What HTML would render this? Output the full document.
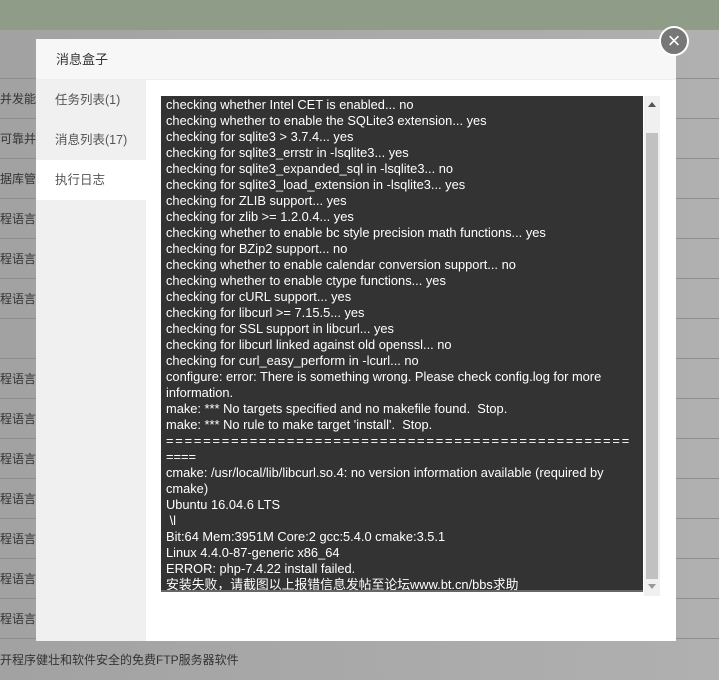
<!DOCTYPE html>
<html><head><meta charset="utf-8"><style>
*{margin:0;padding:0;box-sizing:border-box}
body{width:719px;height:673px;overflow:hidden;position:relative;background:linear-gradient(90deg,#a2a2a2,#b0b0b0);font-family:"Liberation Sans","Noto Sans CJK SC",sans-serif}
.top{position:absolute;left:0;top:0;width:719px;height:30px;background:#8f9c87}
.row{position:absolute;left:0;width:719px;height:40px;border-bottom:1px solid #8e8e8e;font-size:12px;color:#333;line-height:40px;white-space:nowrap}
.dlg{position:absolute;left:36px;top:39px;width:640px;height:602px;background:#fff}
.hd{height:41px;background:#f7f7f7;border-bottom:1px solid #eee;font-size:13px;color:#333;line-height:41px;padding-left:20px}
.side{position:absolute;left:0;top:41px;width:110px;height:561px;background:#f0f0f0}
.side div{height:40px;line-height:40px;padding-left:19px;font-size:12.5px;color:#555}
.side .on{background:#fff}
.log{position:absolute;left:125px;top:57px;width:482px;height:496px;background:#333;color:#fff;font-size:12.85px;line-height:16px;padding:1px 5px 0;overflow:hidden;border-bottom:2px solid #666}
.sb{position:absolute;left:608px;top:57px;width:16px;height:500px;background:#f0f0f0}
.th{position:absolute;left:2px;top:37px;width:12px;height:446px;background:#c1c1c1}
.close{position:absolute;left:659px;top:26px;width:30px;height:30px;border-radius:50%;background:#777;border:2px solid #fff;color:#fff;text-align:center;line-height:25px;font-size:22px}
</style></head><body>
<div class="top"></div>
<div class="row" style="top:39px"></div>
<div class="row" style="top:79px">并发能</div>
<div class="row" style="top:119px">可靠并</div>
<div class="row" style="top:159px">据库管理</div>
<div class="row" style="top:199px">程语言</div>
<div class="row" style="top:239px">程语言</div>
<div class="row" style="top:279px">程语言</div>
<div class="row" style="top:319px"></div>
<div class="row" style="top:359px">程语言</div>
<div class="row" style="top:399px">程语言</div>
<div class="row" style="top:439px">程语言</div>
<div class="row" style="top:479px">程语言</div>
<div class="row" style="top:519px">程语言</div>
<div class="row" style="top:559px">程语言</div>
<div class="row" style="top:599px">程语言</div>
<div class="row" style="top:640px;border:none">开程序健壮和软件安全的免费FTP服务器软件</div>
<div class="dlg">
<div class="hd">消息盒子</div>
<div class="side"><div>任务列表(1)</div><div>消息列表(17)</div><div class="on">执行日志</div></div>
<div class="log">checking whether Intel CET is enabled... no<br>checking whether to enable the SQLite3 extension... yes<br>checking for sqlite3 &gt; 3.7.4... yes<br>checking for sqlite3_errstr in -lsqlite3... yes<br>checking for sqlite3_expanded_sql in -lsqlite3... no<br>checking for sqlite3_load_extension in -lsqlite3... yes<br>checking for ZLIB support... yes<br>checking for zlib &gt;= 1.2.0.4... yes<br>checking whether to enable bc style precision math functions... yes<br>checking for BZip2 support... no<br>checking whether to enable calendar conversion support... no<br>checking whether to enable ctype functions... yes<br>checking for cURL support... yes<br>checking for libcurl &gt;= 7.15.5... yes<br>checking for SSL support in libcurl... yes<br>checking for libcurl linked against old openssl... no<br>checking for curl_easy_perform in -lcurl... no<br>configure: error: There is something wrong. Please check config.log for more<br>information.<br>make: *** No targets specified and no makefile found.&nbsp; Stop.<br>make: *** No rule to make target 'install'.&nbsp; Stop.<br><span style="letter-spacing:1.8px">==================================================</span><br>====<br>cmake: /usr/local/lib/libcurl.so.4: no version information available (required by<br>cmake)<br>Ubuntu 16.04.6 LTS<br>&nbsp;\l<br>Bit:64 Mem:3951M Core:2 gcc:5.4.0 cmake:3.5.1<br>Linux 4.4.0-87-generic x86_64<br>ERROR: php-7.4.22 install failed.<br>安装失败，请截图以上报错信息发帖至论坛www.bt.cn/bbs求助</div>
<div class="sb"><div style="position:absolute;left:4px;top:6px;border:4px solid transparent;border-bottom:5px solid #555;border-top:0"></div><div class="th"></div><div style="position:absolute;left:4px;top:488px;border:4px solid transparent;border-top:5px solid #999;border-bottom:0"></div></div>
</div>
<div class="close">×</div>
</body></html>
